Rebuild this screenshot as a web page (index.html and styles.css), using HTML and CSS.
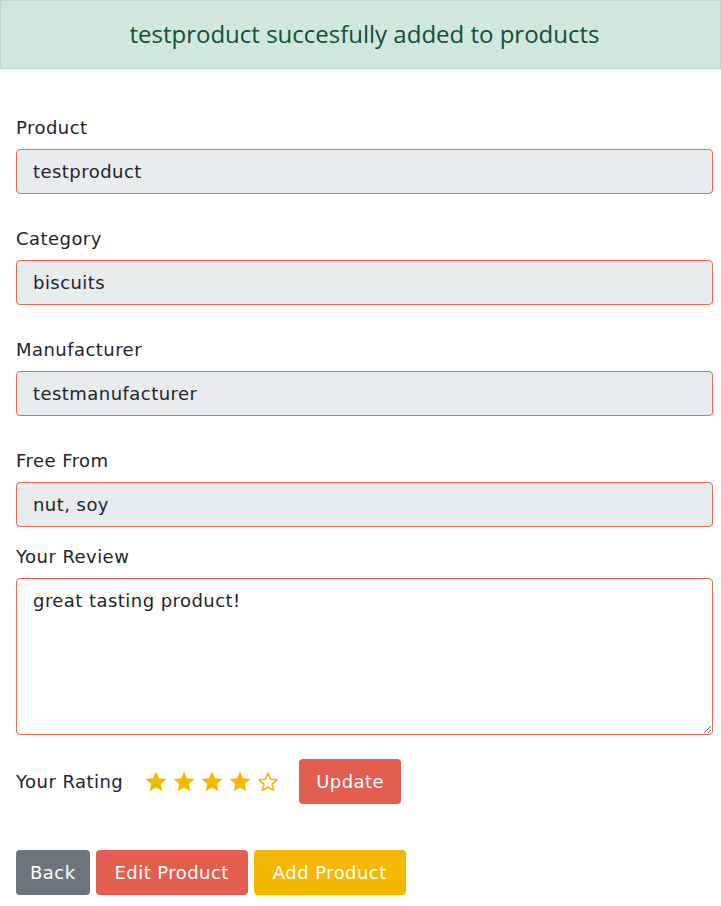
FILE: index.html
```html
<!DOCTYPE html>
<html>
<head>
<meta charset="utf-8">
<link rel="stylesheet" href="styles.css">
</head>
<body>
<div class="alert">testproduct succesfully added to products</div>
<form class="form">
  <div class="field">
    <label class="label">Product</label>
    <input class="input" type="text" value="testproduct" readonly>
  </div>
  <div class="field">
    <label class="label">Category</label>
    <input class="input" type="text" value="biscuits" readonly>
  </div>
  <div class="field">
    <label class="label">Manufacturer</label>
    <input class="input" type="text" value="testmanufacturer" readonly>
  </div>
  <div class="field field-tight">
    <label class="label">Free From</label>
    <input class="input" type="text" value="nut, soy" readonly>
  </div>
  <div class="field field-review">
    <label class="label">Your Review</label>
    <textarea class="textarea">great tasting product!</textarea>
  </div>
  <div class="rating-row">
    <span class="rating-label">Your Rating</span>
    <div class="stars">
      <svg class="star" viewBox="0 0 24 24"><path class="full" d="M12 1.5l3 6.8 7.4.7-5.6 4.9 1.7 7.3L12 17.4l-6.5 3.8 1.7-7.3L1.6 9l7.4-.7z"/></svg>
      <svg class="star" viewBox="0 0 24 24"><path class="full" d="M12 1.5l3 6.8 7.4.7-5.6 4.9 1.7 7.3L12 17.4l-6.5 3.8 1.7-7.3L1.6 9l7.4-.7z"/></svg>
      <svg class="star" viewBox="0 0 24 24"><path class="full" d="M12 1.5l3 6.8 7.4.7-5.6 4.9 1.7 7.3L12 17.4l-6.5 3.8 1.7-7.3L1.6 9l7.4-.7z"/></svg>
      <svg class="star" viewBox="0 0 24 24"><path class="full" d="M12 1.5l3 6.8 7.4.7-5.6 4.9 1.7 7.3L12 17.4l-6.5 3.8 1.7-7.3L1.6 9l7.4-.7z"/></svg>
      <svg class="star" viewBox="0 0 24 24"><path class="empty" d="M12 3.2l2.6 6 6.5.6-4.9 4.3 1.5 6.4L12 17.2l-5.7 3.3 1.5-6.4-4.9-4.3 6.5-.6z"/></svg>
    </div>
    <button type="button" class="btn btn-red">Update</button>
  </div>
  <div class="actions">
    <button type="button" class="btn btn-grey btn-back">Back</button>
    <button type="button" class="btn btn-red btn-wide">Edit Product</button>
    <button type="button" class="btn btn-yellow btn-wide">Add Product</button>
  </div>
</form>
</body>
</html>
```
FILE: styles.css
```css
* { box-sizing: border-box; }
body {
  margin: 0;
  font-family: "DejaVu Sans", sans-serif;
  font-size: 18px;
  letter-spacing: 0.45px;
  color: #212529;
  background: #fff;
}
.alert {
  background: #d1e7dd;
  color: #0f5132;
  border: 1px solid #badbcc;
  height: 69px;
  display: flex;
  align-items: center;
  justify-content: center;
  font-family: "Open Sans", sans-serif;
  font-size: 24px;
  letter-spacing: 0;
  padding: 0 0 3px 8px;
}
.form {
  padding: 45px 8px 0 16px;
}
.field {
  display: flex;
  flex-direction: column;
  margin-bottom: 31px;
}
.field-tight { margin-bottom: 16px; }
.field-review { margin-bottom: 24px; }
.label {
  line-height: 27px;
  margin-bottom: 8px;
}
.input, .textarea {
  font-family: inherit;
  font-size: 18px;
  letter-spacing: 0.45px;
  color: #212529;
  border: 1px solid #e8685b;
  border-radius: 4px;
  padding: 0 16px;
  width: 100%;
}
.input {
  height: 45px;
  background: #e9ecef;
  outline: none;
}
.textarea {
  height: 157px;
  padding-top: 8px;
  background: #fff;
  line-height: 27px;
  outline: none;
  margin: 0;
}
.rating-row {
  display: flex;
  align-items: center;
}
.rating-label {
  margin-right: 21px;
}
.stars {
  display: flex;
  gap: 4px;
  margin-right: 19px;
}
.star {
  width: 24px;
  height: 24px;
}
.star .full { fill: #f5b800; }
.star .empty { fill: none; stroke: #f5b800; stroke-width: 1.6; stroke-linejoin: round; }
.btn {
  font-family: inherit;
  font-size: 18px;
  letter-spacing: 0.45px;
  color: #fff;
  border: none;
  border-radius: 4px;
  height: 45px;
  padding: 0 17px;
  cursor: pointer;
}
.btn-back { padding: 0 14px; }
.btn-wide { padding: 0 19px; }
.btn-red { background: #e35d50; }
.btn-grey { background: #6c757d; }
.btn-yellow { background: #f5b800; }
.actions {
  display: flex;
  gap: 6px;
  margin-top: 46px;
}
```
